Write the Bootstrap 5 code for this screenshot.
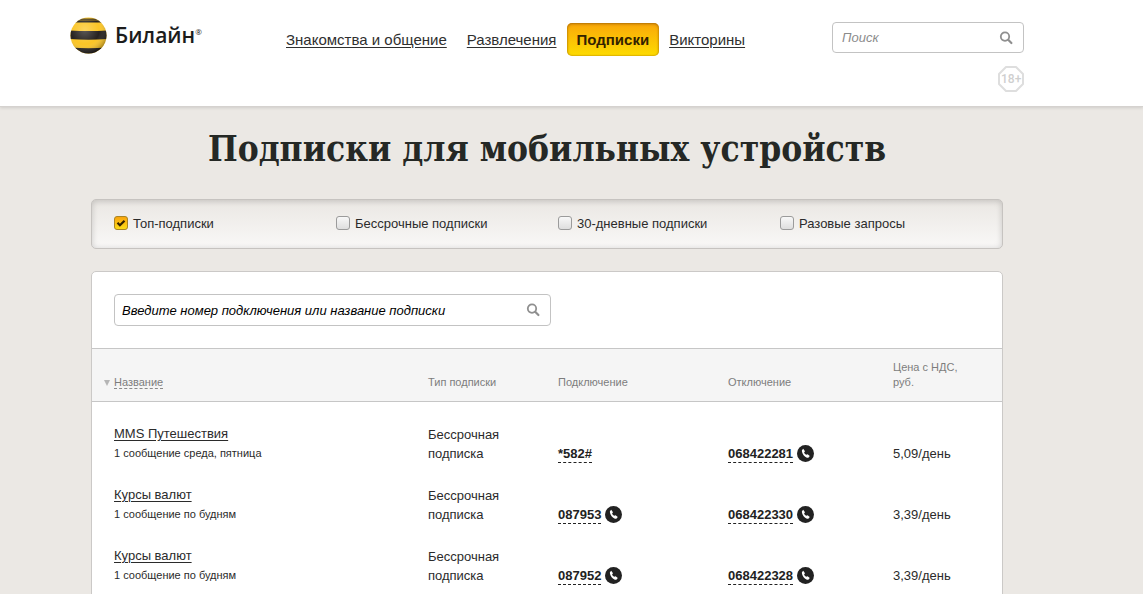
<!DOCTYPE html>
<html lang="ru">
<head>
<meta charset="utf-8">
<meta name="viewport" content="width=device-width, initial-scale=1">
<title>Билайн — Подписки для мобильных устройств</title>
<link href="https://cdn.jsdelivr.net/npm/bootstrap@5.3.0/dist/css/bootstrap.min.css" rel="stylesheet">
<style>
  body { background: #ebe8e4; color: #2b2b2b; font: 13px/19px "Liberation Sans", Arial, sans-serif; }
  a { color: inherit; }
  a:hover { color: #c98a00; }
  .page-col { max-width: 954px; }
  .page-shift { padding-right: 49px; }
  .site-header { background: #fff; min-height: 107px; border-bottom: 1px solid #d5d2cf; box-shadow: 0 1px 3px rgba(0,0,0,.12); }
  .brand { height: 36px; margin-top: 17px; gap: 8px; width: 206px; font: 600 21px/36px "Open Sans", sans-serif; color: #1c1c1c; }
  .brand sup { font-size: 8px; font-weight: 400; top: -8px; }
  .main-nav { margin-top: 23px; font-size: 15px; line-height: 33px; }
  .main-nav .nav-link { padding: 0 10px; line-height: 33px; color: #2f2f2f; text-decoration: underline; text-underline-offset: 2px; border-radius: 5px; }
  .main-nav .nav-link.active { color: #332200; font-weight: 700; text-decoration: none; background: linear-gradient(#f9a70a, #fddc00); box-shadow: inset 0 1px 3px rgba(140,80,0,.6), inset 0 0 1px 1px rgba(190,130,0,.3); }
  .site-search { width: 192px; margin-top: 22px; }
  .field { background: #fff; border: 1px solid #c3c3c3; border-radius: 4px; }
  .field input { font-style: italic; font-size: 13px; line-height: 19px; padding: 5px 0 5px 7px; border: 0; background: none; box-shadow: none; }
  .field input:focus { box-shadow: none; background: none; }
  .site-search input::placeholder { color: #8b8b8b; }
  .site-search .field input { padding-left: 9px; }
  .list-search input::placeholder { color: #000; opacity: 1; }
  .field button { border: 0; background: none; padding: 0 10px; line-height: 0; color: #8f8f8f; }
  .age { margin-top: 13px; }
  h1 { font: 700 35px/48px "DejaVu Serif Condensed", "DejaVu Serif", serif; color: #252825; margin: 18px 0 26px; }
  .inner { padding: 0 21px; }
  .filters { height: 50px; border: 1px solid #c6c3c0; border-radius: 5px; background: linear-gradient(#eae7e3, #f9f8f7); box-shadow: inset 0 1px 6px rgba(0,0,0,.18); padding: 0 0 2px 22px; margin-bottom: 22px; }
  .filters .form-check { width: 222px; min-height: 0; margin: 0; padding: 0; gap: 5px; }
  .filters .form-check-input { width: 14px; height: 14px; margin: 0; float: none; border: 1px solid #9b9b9b; border-radius: 3px; background-color: #e9e9e9; background-image: linear-gradient(#f8f8f8, #dedede); }
  .filters .form-check-input:checked { border-color: #a98526; background-color: #fbc00d; background-size: 12px 12px, 100% 100%; background-image: url("data:image/svg+xml,%3csvg xmlns='http://www.w3.org/2000/svg' viewBox='0 0 12 12'%3e%3cpath fill='none' stroke='%23332200' stroke-width='2.2' d='m2.5 5.8 2.4 2.5 4.6-4.6'/%3e%3c/svg%3e"), linear-gradient(#f9a40c, #fcdc18); }
  .list-panel { background: #fff; border: 1px solid #cbc9c7; border-radius: 5px; padding-bottom: 22px; }
  .list-search { width: 437px; margin: 22px; }
  .list-search .field input { padding-top: 6px; padding-bottom: 5px; }
  .subs { table-layout: fixed; width: 100%; }
  .subs th { background: #f5f5f5; border-top: 1px solid #c6c6c6; border-bottom: 1px solid #c6c6c6; font-weight: 400; font-size: 11px; line-height: 15px; color: #7d7d7d; vertical-align: bottom; padding: 11px 0; }
  .subs td { padding: 23px 0 0; vertical-align: bottom; }
  .subs td:first-child { padding: 22px 0 0 22px; vertical-align: top; }
  .subs tbody a { text-underline-offset: 2px; }
  .subs th:first-child { padding-left: 12px; }
  .note { font-size: 11px; line-height: 20px; }
  .c-type { width: 130px; } .c-on { width: 170px; } .c-off { width: 165px; } .c-price { width: 109px; }
  .sort { display: inline-block; border: 3px solid transparent; border-top: 6px solid #b5b5b5; border-bottom: 0; margin-right: 4px; }
  .dashed { text-decoration: none; border-bottom: 1px dashed #8a8a8a; }
  .code { font-weight: 700; text-decoration: none; line-height: 17px; border-bottom: 1px dashed #222; color: #222; }
  .dial { gap: 4px; height: 19px; }
</style>
</head>
<body>
<svg class="d-none" aria-hidden="true">
  <symbol id="lens" viewBox="0 0 14 14"><circle cx="6" cy="5.600" r="4.200" fill="none" stroke="currentColor" stroke-width="1.800"/><path d="m9.200 8.800 3.200 3.200" stroke="currentColor" stroke-width="2.200" stroke-linecap="round"/></symbol>
  <symbol id="call" viewBox="0 0 17 17"><circle cx="8.500" cy="8.500" r="8.500" fill="#222"/><path d="M4.900 5.200 6.200 3.800l1.800 2.500-.9 1.200c.4 1 1 1.700 2.100 2.300l1.400-.6 2.200 1.900-1.200 1.500c-.8.5-2.300.1-3.700-1.100C6.100 9.900 4.600 7.100 4.900 5.200z" fill="#fff"/></symbol>
</svg>

<header class="site-header page-shift">
  <div class="page-col mx-auto d-flex align-items-start">
    <a class="brand d-flex align-items-center text-decoration-none flex-shrink-0" href="#">
      <svg width="37" height="37" viewBox="0 0 37 37" aria-hidden="true">
        <defs>
          <clipPath id="ball"><circle cx="18.500" cy="18.500" r="18"/></clipPath>
          <radialGradient id="shade" cx=".4" cy=".35" r=".65"><stop offset="0" stop-color="#fff" stop-opacity=".25"/><stop offset=".6" stop-color="#fff" stop-opacity="0"/><stop offset="1" stop-color="#000" stop-opacity=".3"/></radialGradient>
        </defs>
        <g clip-path="url(#ball)">
          <path fill="#fbc526" d="M0 0h37v37H0z"/>
          <path fill="#262220" d="M0 3.500h37v2H0zM0 13.500q18.500 1 37 0v8.500q-18.500 1.500-37 0zM0 30.500q18.500 1.500 37 0V37H0z"/>
          <path fill="#262220" opacity=".75" d="M0 1.500h37v2H0z"/>
          <path fill="url(#shade)" d="M0 0h37v37H0z"/>
        </g>
      </svg>
      <span>Билайн<sup>®</sup></span>
    </a>
    <nav class="main-nav nav flex-nowrap text-nowrap">
      <a class="nav-link" href="#">Знакомства и общение</a>
      <a class="nav-link" href="#">Развлечения</a>
      <a class="nav-link active" href="#" aria-current="page">Подписки</a>
      <a class="nav-link" href="#">Викторины</a>
    </nav>
    <form class="site-search ms-auto flex-shrink-0">
      <div class="field d-flex">
        <input class="form-control" type="text" placeholder="Поиск" aria-label="Поиск">
        <button type="button" aria-label="Найти"><svg width="14" height="14"><use href="#lens"/></svg></button>
      </div>
      <div class="age d-flex justify-content-end">
        <svg width="26" height="26" viewBox="0 0 26 26" role="img" aria-label="18+"><path d="M8 1h10l7 7v10l-7 7H8l-7-7V8z" fill="none" stroke="#dedede" stroke-width="2" stroke-linejoin="round"/><text x="3" y="17" font-family="Roboto, sans-serif" font-size="12" font-weight="500" fill="#cfcfcf">18+</text></svg>
      </div>
    </form>
  </div>
</header>

<main class="page-shift pb-4">
  <div class="page-col inner mx-auto">
    <h1 class="text-center text-nowrap">Подписки для мобильных устройств</h1>

    <form class="filters d-flex align-items-center">
      <div class="form-check d-flex align-items-center"><input class="form-check-input" type="checkbox" id="f1" checked><label for="f1">Топ-подписки</label></div>
      <div class="form-check d-flex align-items-center"><input class="form-check-input" type="checkbox" id="f2"><label for="f2">Бессрочные подписки</label></div>
      <div class="form-check d-flex align-items-center"><input class="form-check-input" type="checkbox" id="f3"><label for="f3">30-дневные подписки</label></div>
      <div class="form-check d-flex align-items-center"><input class="form-check-input" type="checkbox" id="f4"><label for="f4">Разовые запросы</label></div>
    </form>

    <section class="list-panel">
      <form class="list-search">
        <div class="field d-flex">
          <input class="form-control" type="text" placeholder="Введите номер подключения или название подписки" aria-label="Поиск подписки">
          <button type="button" aria-label="Найти"><svg width="14" height="14"><use href="#lens"/></svg></button>
        </div>
      </form>
      <table class="subs">
        <thead>
          <tr>
            <th scope="col"><span class="sort"></span><a class="dashed" href="#">Название</a></th>
            <th scope="col" class="c-type">Тип подписки</th>
            <th scope="col" class="c-on">Подключение</th>
            <th scope="col" class="c-off">Отключение</th>
            <th scope="col" class="c-price">Цена с НДС,<br>руб.</th>
          </tr>
        </thead>
        <tbody>
          <tr>
            <td><a href="#">MMS Путешествия</a><div class="note">1 сообщение среда, пятница</div></td>
            <td>Бессрочная<br>подписка</td>
            <td><div class="dial d-flex align-items-center"><a class="code" href="#">*582#</a></div></td>
            <td><div class="dial d-flex align-items-center"><a class="code" href="#">068422281</a><svg width="17" height="17"><use href="#call"/></svg></div></td>
            <td>5,09/день</td>
          </tr>
          <tr>
            <td><a href="#">Курсы валют</a><div class="note">1 сообщение по будням</div></td>
            <td>Бессрочная<br>подписка</td>
            <td><div class="dial d-flex align-items-center"><a class="code" href="#">087953</a><svg width="17" height="17"><use href="#call"/></svg></div></td>
            <td><div class="dial d-flex align-items-center"><a class="code" href="#">068422330</a><svg width="17" height="17"><use href="#call"/></svg></div></td>
            <td>3,39/день</td>
          </tr>
          <tr>
            <td><a href="#">Курсы валют</a><div class="note">1 сообщение по будням</div></td>
            <td>Бессрочная<br>подписка</td>
            <td><div class="dial d-flex align-items-center"><a class="code" href="#">087952</a><svg width="17" height="17"><use href="#call"/></svg></div></td>
            <td><div class="dial d-flex align-items-center"><a class="code" href="#">068422328</a><svg width="17" height="17"><use href="#call"/></svg></div></td>
            <td>3,39/день</td>
          </tr>
        </tbody>
      </table>
    </section>
  </div>
</main>
<script src="https://cdn.jsdelivr.net/npm/bootstrap@5.3.0/dist/js/bootstrap.bundle.min.js"></script>
</body>
</html>
